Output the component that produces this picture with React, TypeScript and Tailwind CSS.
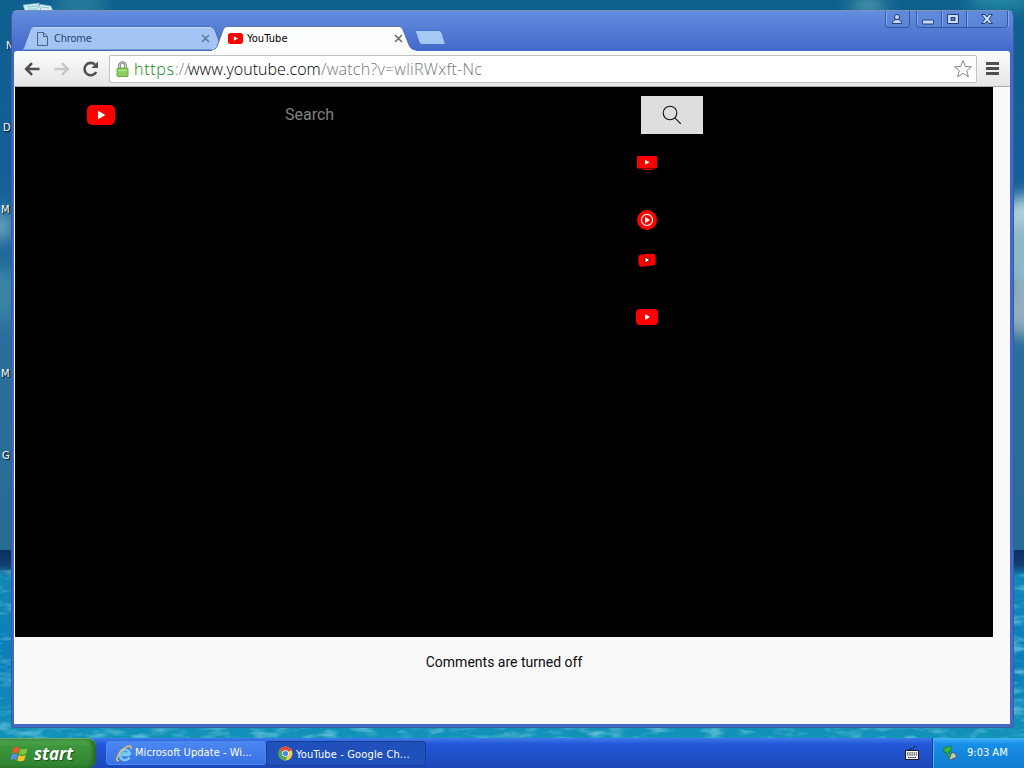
import React from "react";

const desktopLabels = [
  { text: "N", top: 39, left: 6 },
  { text: "D", top: 121, left: 3 },
  { text: "M", top: 203, left: 1 },
  { text: "M", top: 367, left: 1 },
  { text: "G", top: 449, left: 2 },
];

function Wallpaper() {
  return (
    <svg className="absolute inset-0" width="1024" height="768" viewBox="0 0 1024 768">
      <defs>
        <linearGradient id="sky" x1="0" y1="0" x2="0" y2="1">
          <stop offset="0" stopColor="#0d608e" />
          <stop offset="0.3" stopColor="#145f98" />
          <stop offset="0.6" stopColor="#2a6f9d" />
          <stop offset="1" stopColor="#286c91" />
        </linearGradient>
        <linearGradient id="sea" x1="0" y1="0" x2="0" y2="1">
          <stop offset="0" stopColor="#0b2f5c" />
          <stop offset="0.07" stopColor="#0e3f70" />
          <stop offset="0.12" stopColor="#1286b5" />
          <stop offset="0.5" stopColor="#0b7db8" />
          <stop offset="1" stopColor="#149bb8" />
        </linearGradient>
        <filter id="soft" x="-50%" y="-50%" width="200%" height="200%">
          <feGaussianBlur stdDeviation="8" />
        </filter>
        <filter id="waves" x="0" y="0" width="100%" height="100%">
          <feTurbulence type="fractalNoise" baseFrequency="0.04 0.13" numOctaves="3" seed="4" />
          <feColorMatrix values="0 0 0 0 0.35  0 0 0 0 0.8  0 0 0 0 0.9  2.8 0 0 0 -1.3" />
        </filter>
      </defs>
      <rect width="1024" height="550" fill="url(#sky)" />
      <g filter="url(#soft)">
        <ellipse cx="80" cy="5" rx="26" ry="10" fill="#2f7f9c" />
        <ellipse cx="868" cy="6" rx="18" ry="8" fill="#57a0b0" />
        <ellipse cx="1000" cy="0" rx="34" ry="9" fill="#2c91a7" />
        <ellipse cx="0" cy="226" rx="13" ry="14" fill="#6ca6bd" />
        <ellipse cx="0" cy="295" rx="20" ry="28" fill="#3b84a5" />
        <ellipse cx="1024" cy="222" rx="24" ry="26" fill="#b4d2da" />
        <ellipse cx="1024" cy="255" rx="24" ry="35" fill="#8ebac7" />
        <ellipse cx="1024" cy="308" rx="24" ry="28" fill="#93afbc" />
      </g>
      <rect y="550" width="1024" height="218" fill="url(#sea)" />
      <rect y="570" width="1024" height="198" filter="url(#waves)" opacity="0.5" />
      {/* top icon, mostly hidden by the browser window */}
      <path d="M23 5l16-2 2 8H25zM39 4l12 2 2 5H36z" fill="#d7eef2" stroke="#6f9eb2" strokeWidth="0.7" />
      <path d="M27 7l10-1M28 9h8M42 7l7 1" stroke="#79c8d8" />
    </svg>
  );
}

function YouTubeMark({ className }: { className?: string }) {
  return (
    <svg className={className} viewBox="0 0 28 20" preserveAspectRatio="none">
      <rect width="28" height="20" rx="5" fill="#f00" />
      <path d="M11 5.800v8.400l7.400-4.200z" fill="#fff" />
    </svg>
  );
}

function CloseIcon({ color }: { color: string }) {
  return (
    <svg width="9" height="9" viewBox="0 0 9 9">
      <path d="M1 1l7 7M8 1l-7 7" stroke={color} strokeWidth="1.500" />
    </svg>
  );
}

function TabStrip() {
  return (
    <div className="flex h-10 pt-[15px] pl-[9px]">
      <div className="relative h-[25px] w-[199px]">
        <svg className="absolute inset-0" width="199" height="25" viewBox="0 0 199 25">
          <path
            d="M0 24C3 23 3 21 4 18L9 4Q10 .5 13 .5H189Q192 .5 194 4L199 18V24z"
            fill="#a4c5f4"
            stroke="#4771b5"
          />
          <path d="M12 1.500H190" stroke="#bfdafa" />
        </svg>
        <div className="relative flex h-[25px] items-center pl-[16px] text-[11px] text-[#24466f]">
          <svg width="11" height="14" viewBox="0 0 11 14" fill="none" stroke="#4b6483">
            <path d="M.5.5H6.500L10.500 4.500V13.500H.5zM6.500.5V4.500H10.500" />
          </svg>
          <span className="ml-[6px] pt-px tracking-[-0.2px]">Chrome</span>
          <span className="mr-[10px] ml-auto">
            <CloseIcon color="#5c7798" />
          </span>
        </div>
      </div>
      <div className="relative -ml-2 h-[25px] w-[206px]">
        <svg className="absolute inset-0" width="206" height="25" viewBox="0 0 206 25">
          <path
            d="M0 24C4 23 5 21 6 18L11 4Q12 .5 15 .5H187Q190 .5 191 4L197 19Q199 24 204 24V25H0z"
            fill="#fdfefe"
          />
          <path
            d="M1 24C4 23 5 21 6 18L11 4Q12 .5 15 .5H187Q190 .5 191 4L197 19Q199 24 204 24"
            fill="none"
            stroke="#4264a8"
            strokeWidth="0.8"
          />
        </svg>
        <div className="relative flex h-[25px] items-center pl-[16px] text-[11px] text-black">
          <YouTubeMark className="h-[11px] w-[15px]" />
          <span className="ml-[4px] pt-px tracking-[0.1px]">YouTube</span>
          <span className="mr-[15px] ml-auto">
            <CloseIcon color="#666" />
          </span>
        </div>
      </div>
      <svg className="mt-1 -ml-[4px]" width="34" height="17" viewBox="0 0 34 17">
        <path
          d="M3 .5H25Q27 .5 28 3L31.500 14.500H8Q6 14.500 5 12L1.500 2Q1 .5 3 .5z"
          fill="#a6c8f5"
          stroke="#4674c4"
        />
      </svg>
    </div>
  );
}

function WindowButtons() {
  return (
    <svg className="absolute top-0 right-[4px]" width="126" height="19" viewBox="0 0 126 19">
      <g fill="#5f8adb" fillOpacity="0.55" stroke="#36569f">
        <path d="M2.500 0V14Q2.500 16.500 5 16.500H23Q26.500 16.500 26.500 14V0" />
        <path d="M33.500 0V14Q33.500 16.500 36 16.500H121Q124.500 16.500 124.500 14V0" />
        <path d="M58.500 0V16M83.500 0V16" />
      </g>
      <path d="M3.500 0V14M34.500 0V14M59.500 0V16M84.500 0V16M125.500 0V15" stroke="#83a8eb" />
      <g fill="#c7dcfa" stroke="#233d77">
        <circle cx="14" cy="6" r="2.500" />
        <path d="M9.500 12.500Q9.500 8.500 14 8.500t4.500 4z" />
        <rect x="39.500" y="9" width="11" height="4" rx="1" />
        <path
          fillRule="evenodd"
          d="M64.500 3.500H75.500V12.500H64.500zM68 6.500H72V9.500H68z"
        />
        <path d="M98.500 3.500H102L104 6 106 3.500H109.500L106 8 109.500 12.500H106L104 10 102 12.500H98.500L102 8z" />
      </g>
    </svg>
  );
}

function Toolbar() {
  return (
    <div className="flex h-9 items-center border-b border-[#aaa] bg-gradient-to-b from-[#fbfcfc] to-[#e6e6e6] pl-[10px]">
      <svg width="16" height="14" viewBox="0 0 16 14" fill="none" stroke="#505050" strokeWidth="2.600">
        <path d="M2 7H15.500M8 1.200L2.200 7 8 12.800" />
      </svg>
      <svg className="ml-[14px]" width="16" height="14" viewBox="0 0 16 14" fill="none" stroke="#c6c6c6" strokeWidth="2.400">
        <path d="M.5 7H14M8 1.200L13.800 7 8 12.800" />
      </svg>
      <svg className="ml-[12px]" width="18" height="18" viewBox="0 0 18 18">
        <path d="M14.200 12A6.200 6.200 0 1 1 13 4.600" fill="none" stroke="#505050" strokeWidth="2.600" />
        <path d="M16 1.500V8H9.500z" fill="#505050" />
      </svg>
      <div className="ml-[9px] flex h-7 w-[868px] items-center rounded-[2px] border border-[#c2c2c2] bg-white pl-[6px]">
        <svg width="13" height="16" viewBox="0 0 13 16">
          <path d="M3.500 8V4.500a3 3 0 0 1 6 0V8" fill="none" stroke="#777" strokeWidth="2.600" />
          <path d="M3.500 8V4.500a3 3 0 0 1 6 0V8" fill="none" stroke="#ddd" strokeWidth="1" />
          <rect x="1" y="7" width="11" height="8.500" rx="1" fill="#8fcf62" stroke="#6aa94b" />
          <path d="M2 9.500H11" stroke="#b5e78e" />
        </svg>
        <div className="ml-[5px] flex font-['Open_Sans'] text-base leading-none font-light whitespace-pre">
          <span className="w-[41px] tracking-[0.7px] text-[#128212]">https</span>
          <span className="w-[13px] text-[#808080]">://</span>
          <span className="w-[133px] text-black">www.youtube.com</span>
          <span className="tracking-[0.250px] text-[#777]">/watch?v=wliRWxft-Nc</span>
        </div>
        <svg className="mr-[3px] ml-auto" width="20" height="20" viewBox="0 0 20 20">
          <path
            d="M10 1.500L12.300 7.500 18.500 7.800 13.700 11.700 15.400 17.800 10 14.400 4.600 17.800 6.300 11.700 1.500 7.800 7.700 7.500z"
            fill="#fff"
            stroke="#858585"
            strokeLinejoin="round"
          />
        </svg>
      </div>
      <svg className="ml-[9px]" width="13" height="13" viewBox="0 0 13 13">
        <path d="M0 1.500H13M0 6.500H13M0 11.500H13" stroke="#505050" strokeWidth="2.800" />
      </svg>
    </div>
  );
}

function Page() {
  return (
    <div className="flex-1 bg-[#f9f9f9] font-[Roboto]">
      <div className="h-[550px] w-[979px] border-l border-white bg-black">
        <div className="flex h-[56px] items-center">
          <YouTubeMark className="ml-[72px] h-5 w-[28px]" />
          <span className="ml-[170px] w-[356px] text-base text-[#808080]">Search</span>
          <div className="flex h-[38px] w-[62px] items-center justify-center bg-[#dedede]">
            <svg width="20" height="20" viewBox="0 0 20 20" fill="none" stroke="#111" strokeWidth="1.100">
              <circle cx="8" cy="8" r="6.800" />
              <path d="M12.800 12.800L18.800 18.800" />
            </svg>
          </div>
        </div>
        <div className="ml-[621px] flex w-[22px] flex-col items-center pt-[13px]">
          <svg width="20" height="14" viewBox="0 0 20 14">
            <rect width="20" height="12.500" rx="1" fill="#f00" />
            <path d="M8 3.700v5l4.500-2.500z" fill="#fff" />
            <path d="M5 13.500H16" stroke="#d00000" />
          </svg>
          <svg className="mt-[40px]" width="20" height="20" viewBox="0 0 20 20">
            <circle cx="10" cy="10" r="10" fill="#f00" />
            <circle cx="10" cy="10" r="5.600" fill="none" stroke="#fff" strokeWidth="1.100" />
            <path d="M8 6.800v6.400l5-3.200z" fill="#fff" />
          </svg>
          <svg className="mt-[23px]" width="20" height="14" viewBox="0 0 20 14">
            <path d="M1.500 3Q2 1.500 10 1T18 1.300Q19 3 18.700 10 18.500 12 17 12.200L5 13.700Q2.500 14 2 12 1 8 1.500 3z" fill="#f00" />
            <path d="M8 4v6l5-3z" fill="#fff" stroke="#300" strokeWidth="0.800" />
          </svg>
          <svg className="mt-[42px]" width="22" height="16" viewBox="0 0 22 16">
            <rect width="22" height="16" rx="4" fill="#f00" />
            <path d="M9 5v6l5-3z" fill="#fff" />
          </svg>
        </div>
      </div>
      <p className="w-[980px] pt-[15px] text-center text-sm text-[#0d0d0d]">Comments are turned off</p>
    </div>
  );
}

function BrowserWindow() {
  return (
    <div className="absolute top-[10px] left-[11px] flex h-[718px] w-[1003px] flex-col rounded-t-[6px] rounded-b-[3px] border border-[#3e5b9d] border-t-[#7d93b8] bg-[#4a6bbd] bg-gradient-to-b from-[#638ddd] to-[#4268ca] to-[41px]">
      <TabStrip />
      <div className="mr-[3px] mb-[3px] ml-[2px] flex flex-1 flex-col overflow-hidden rounded-t-[3px]">
        <Toolbar />
        <Page />
      </div>
      <WindowButtons />
    </div>
  );
}

function WindowsFlag() {
  return (
    <svg width="19" height="18" viewBox="0 0 19 18">
      <path d="M3.500 3Q6.500 1 9.500 3L8 8.500Q5 6.500 2 8.300z" fill="#e8592b" />
      <path d="M10.500 3.500Q14 5.300 17.500 3.300L16 8.700Q12.500 10.700 9 8.900z" fill="#82c443" />
      <path d="M1.700 9.500Q4.700 7.800 7.700 9.600L6.200 15Q3.500 13.300.5 14.900z" fill="#5a8ff0" />
      <path d="M8.700 10Q12 11.800 15.700 9.900L14.200 15.300Q10.700 17.300 7.200 15.500z" fill="#f5c52c" />
    </svg>
  );
}

function Taskbar() {
  return (
    <div className="absolute inset-x-0 bottom-0 flex h-[30px] bg-gradient-to-b from-[#3e7cec] via-[#2457d8] via-20% to-[#1b47b8] text-[11px] text-white">
      <div className="flex w-24 items-center rounded-r-[8px] border-t border-[#68a769] bg-gradient-to-b from-[#55ac52] via-[#3d963d] via-25% to-[#2f822f] pl-[10px] shadow-[inset_-3px_0_4px_#23662a]">
        <WindowsFlag />
        <span className="ml-[5px] font-['Open_Sans'] text-[17px] leading-none font-bold italic [text-shadow:1px_1px_1px_#1c4f1c]">
          start
        </span>
      </div>
      <div className="mt-[3px] ml-[10px] flex h-[24px] w-[160px] items-center rounded-[3px] border border-[#4c86f0] bg-gradient-to-b from-[#4c88f3] to-[#3971e4] pl-[9px]">
        <svg width="17" height="17" viewBox="0 0 17 17" fill="none">
          <path d="M14 10H5.500M13.500 12.500A5.200 5.200 0 1 1 14 8.500L6 8.500" stroke="#75cbf4" strokeWidth="2.600" />
          <path d="M3 15.500C-1 17 1 10 6 5S16 0 15 4" stroke="#eec35a" strokeWidth="1.500" />
        </svg>
        <span className="ml-[2px] pt-px tracking-[0.05px] whitespace-nowrap">Microsoft Update - Wi...</span>
      </div>
      <div className="mt-[3px] flex h-[25px] w-[160px] items-center rounded-[3px] border border-[#183d97] bg-[#2050ba] pl-[11px]">
        <svg width="15" height="15" viewBox="0 0 15 15">
          <circle cx="7.500" cy="7.500" r="7" fill="#f4ce43" />
          <path d="M7.500 7.500L1.400 4A7 7 0 0 1 13.600 4z" fill="#dd4c3b" />
          <path d="M7.500 7.500L1.400 4A7 7 0 0 0 7.500 14.500L10 9z" fill="#4ca65a" />
          <circle cx="7.500" cy="7.500" r="3.300" fill="#fff" />
          <circle cx="7.500" cy="7.500" r="2.600" fill="#4a86e6" />
        </svg>
        <span className="ml-[3px] pt-[3px] tracking-[0.150px] whitespace-nowrap">YouTube - Google Ch...</span>
      </div>
      <div className="mr-[13px] ml-auto flex items-center">
        <svg width="14" height="14" viewBox="0 0 14 14">
          <path d="M4 4Q4 2 6 3T9 1T12 1" fill="none" stroke="#142446" />
          <rect x=".5" y="4.500" width="13" height="9" fill="#fff" stroke="#101a33" />
          <path d="M2 7H12M2 9H12M3 11.500H11" stroke="#111" strokeDasharray="1.500 .7" />
        </svg>
      </div>
      <div className="flex w-[92px] items-center border-l border-[#0a3f9d] bg-gradient-to-b from-[#42b3f5] via-[#178fe8] via-20% to-[#117bd0] pl-[10px] shadow-[inset_1px_0_#40baf2]">
        <svg width="15" height="16" viewBox="0 0 15 16">
          <path d="M5 11L11 7 14 12 7 15z" fill="#c4c7bb" stroke="#4e5c62" />
          <path d="M1 3L8 1V6L5 7 8 11 6 13 3 7 1 8z" fill="#39b936" stroke="#15752c" strokeWidth=".8" />
        </svg>
        <span className="ml-[9px] pt-px">9:03 AM</span>
      </div>
    </div>
  );
}

export default function App() {
  return (
    <div className="relative h-[768px] w-[1024px] overflow-hidden font-['DejaVu_Sans_Condensed','DejaVu_Sans',sans-serif]">
      <Wallpaper />
      {desktopLabels.map((label) => (
        <span
          key={label.top}
          className="absolute text-[11px] leading-[14px] text-white [text-shadow:1px_1px_1px_#000]"
          style={{ top: label.top, left: label.left }}
        >
          {label.text}
        </span>
      ))}
      <BrowserWindow />
      <Taskbar />
    </div>
  );
}
